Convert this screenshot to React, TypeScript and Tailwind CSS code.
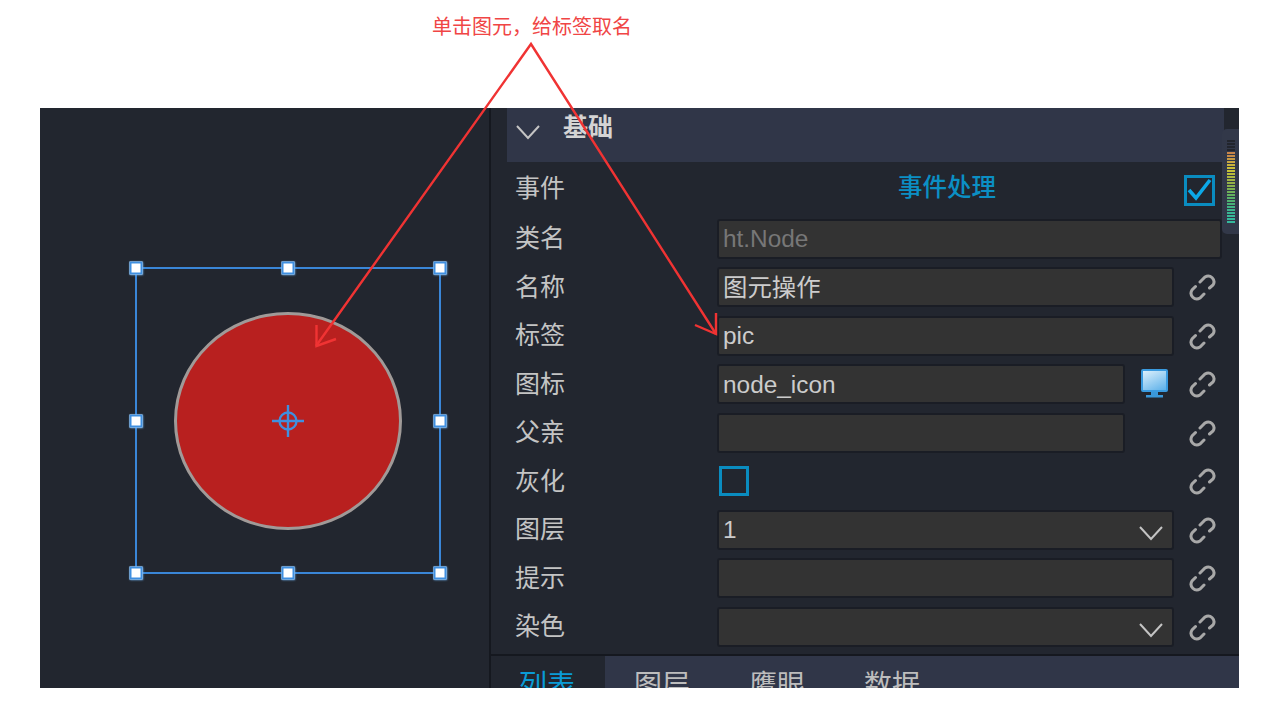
import React from 'react';

const FONT = "font-['Liberation_Sans','Noto_Sans_CJK_SC',sans-serif]";

const ROWS = [
  { label: '类名', value: 'ht.Node', kind: 'wide' },
  { label: '名称', value: '图元操作', kind: 'input' },
  { label: '标签', value: 'pic', kind: 'input' },
  { label: '图标', value: 'node_icon', kind: 'icon' },
  { label: '父亲', value: '', kind: 'short' },
  { label: '灰化', value: '', kind: 'check' },
  { label: '图层', value: '1', kind: 'select' },
  { label: '提示', value: '', kind: 'input' },
  { label: '染色', value: '', kind: 'select' },
];

const TABS = ['列表', '图层', '鹰眼', '数据'];

// meter on the scroll thumb, top to bottom
const METER = [
  '#22252d', '#22252d', '#22252d', '#22252d',
  '#c8854a', '#c88c48', '#c89a44', '#c8a640', '#c8b23c', '#c8bc38', '#c4c038', '#b8bc3c', '#acb840',
  '#a0b444', '#94b048', '#88b04c', '#7cb050', '#70b058', '#64b060', '#58b068', '#50b070', '#48b078',
  '#40b484', '#3cb48c', '#38b494', '#38b898', '#34b89c', '#34b89c',
];

function LinkIcon() {
  return (
    <svg width="28" height="28" viewBox="0 0 28 28" fill="none" stroke="#a8a8a8" strokeWidth="3" strokeLinecap="round" className="shrink-0">
      <path d="M11 9 L16 4 A5.8 5.8 0 0 1 24 12 L20.5 15" />
      <path d="M6.5 13.5 L3 17 A5.8 5.8 0 0 0 11 25 L15 21" />
    </svg>
  );
}

function Chevron({ className }: { className?: string }) {
  return (
    <svg width="24" height="24" viewBox="0 0 24 24" fill="none" stroke="#c4c4c4" strokeWidth="2" className={className}>
      <path d="M1 5 L12 17 L23 5" />
    </svg>
  );
}

function MonitorIcon() {
  return (
    <svg width="28" height="30" viewBox="0 0 28 30" className="shrink-0">
      <defs>
        <linearGradient id="screen" x1="0.2" y1="0" x2="0.8" y2="1">
          <stop offset="0" stopColor="#d8eefb" />
          <stop offset="1" stopColor="#5fb2ea" />
        </linearGradient>
      </defs>
      <rect x="1" y="1" width="25" height="21" rx="1" fill="url(#screen)" stroke="#3a9be0" strokeWidth="2" />
      <rect x="10" y="23" width="7" height="3" fill="#3a97d8" />
      <rect x="5" y="26" width="17" height="2.5" fill="#3a97d8" />
    </svg>
  );
}

function Field({ value, muted, className, children }: { value: string; muted?: boolean; className: string; children?: React.ReactNode }) {
  return (
    <div className={`flex h-[40px] items-center justify-between rounded-[3px] border-2 border-[#1a1d25] bg-[#333333] pl-[4px] pr-[9px] text-[24.4px] ${muted ? 'text-[#777777]' : 'text-[#cccccc]'} ${className}`}>
      <span className="translate-y-[1px]">{value}</span>
      {children}
    </div>
  );
}

function Row({ row }: { row: (typeof ROWS)[number] }) {
  const linked = row.kind !== 'wide';
  return (
    <div className="flex h-[48.5px] items-center">
      <div className="w-[210px] pl-[8px] text-[25px] text-[#c4c4c4]">{row.label}</div>
      {row.kind === 'wide' && <Field value={row.value} muted className="w-[505px]" />}
      {row.kind === 'input' && <Field value={row.value} className="w-[457px]" />}
      {row.kind === 'select' && (
        <Field value={row.value} className="w-[457px]">
          <Chevron className="translate-y-[4px]" />
        </Field>
      )}
      {(row.kind === 'icon' || row.kind === 'short') && (
        <>
          <Field value={row.value} className="w-[408px]" />
          <div className="w-[49px] pl-[16px]">{row.kind === 'icon' && <MonitorIcon />}</div>
        </>
      )}
      {row.kind === 'check' && (
        <div className="w-[457px] pl-[2px]">
          <div className="h-[30px] w-[30px] border-[3px] border-[#0a8cc0]" />
        </div>
      )}
      {linked && (
        <div className="ml-[15px]">
          <LinkIcon />
        </div>
      )}
    </div>
  );
}

function Handle({ className }: { className: string }) {
  return <div className={`absolute h-[13px] w-[13px] -translate-x-1/2 -translate-y-1/2 border-2 border-[#3f8fe0] bg-white shadow-[0_0_2px_#6fb0f0] ${className}`} />;
}

function Canvas() {
  return (
    <div className="relative w-[449px] shrink-0 bg-[#22262f]">
      {/* selected node */}
      <div className="absolute left-[95px] top-[159px] h-[307px] w-[306px] border-2 border-[#3a86d8]">
        <div className="absolute left-[37px] top-[43px] h-[218px] w-[228px] rounded-[50%] border-[3px] border-[#a09a98] bg-[#b8201f]" />
        <svg width="32" height="32" viewBox="0 0 32 32" fill="none" stroke="#3f8fe0" strokeWidth="2.4" className="absolute left-[135px] top-[136px]">
          <circle cx="16" cy="16" r="8.5" />
          <path d="M0 16 H32 M16 0 V32" />
        </svg>
        <div className="absolute -inset-[1px]">
          <Handle className="left-0 top-0" />
          <Handle className="left-1/2 top-0" />
          <Handle className="left-full top-0" />
          <Handle className="left-0 top-1/2" />
          <Handle className="left-full top-1/2" />
          <Handle className="left-0 top-full" />
          <Handle className="left-1/2 top-full" />
          <Handle className="left-full top-full" />
        </div>
      </div>
    </div>
  );
}

function PropertyPanel() {
  return (
    <div className="flex min-w-0 flex-1 flex-col border-l-2 border-[#15181f] bg-[#22262f]">
      <div className="relative flex-1">
        <div className="ml-[16px] mr-[15px] flex h-[54px] items-center bg-[#303648] pl-[9px] text-[#d4d4d4]">
          <Chevron className="-translate-y-[2px]" />
          <span className="ml-[23px] -translate-y-[7px] text-[25px] font-bold">基础</span>
        </div>

        <div className="ml-[16px] pt-[4px]">
          <div className="flex h-[48.5px] items-center">
            <div className="w-[210px] -translate-y-[2px] pl-[8px] text-[25px] text-[#c4c4c4]">事件</div>
            <div className="w-[460px] -translate-y-[2px] text-center text-[24.5px] font-medium text-[#0b8fc4]">事件处理</div>
            <div className="ml-[7px] h-[31px] w-[31px] border-[3px] border-[#0a8cc0]">
              <svg width="25" height="25" viewBox="0 0 25 25" fill="none" stroke="#0ca8e8" strokeWidth="3.6">
                <path d="M2 12 L9 20 L23 2" />
              </svg>
            </div>
          </div>
          {ROWS.map((row) => (
            <Row key={row.label} row={row} />
          ))}
        </div>

        {/* scroll thumb with meter */}
        <div className="absolute right-0 top-[21px] flex h-[105px] w-[17px] flex-col items-center gap-[1px] rounded-l-[5px] bg-[#323849] pt-[11px]">
          {METER.map((color, i) => (
            <div key={i} className="h-[2px] w-[8px]" style={{ backgroundColor: color }} />
          ))}
        </div>
      </div>

      <div className="flex h-[34px] overflow-hidden border-t-2 border-[#15181f] bg-[#303648] text-[28px] leading-[34px] text-[#bdbdbd]">
        {TABS.map((tab, i) => (
          <div key={tab} className={`${i === 0 ? 'w-[114px] bg-[#22262f] pl-[28px] text-[#0a9bd6]' : 'w-[115px] pl-[29px]'} pt-[13px]`}>
            {tab}
          </div>
        ))}
      </div>
    </div>
  );
}

export default function App() {
  return (
    <div className={`relative h-[706px] w-[1271px] overflow-hidden bg-white ${FONT}`}>
      <div className="h-[108px] pl-[432px] pt-[13px] text-[20px] leading-[28px] text-[#f04545]">
        单击图元，给标签取名
      </div>
      <div className="ml-[40px] flex h-[580px] w-[1199px]">
        <Canvas />
        <PropertyPanel />
      </div>

      {/* red annotation arrows */}
      <svg width="1271" height="706" viewBox="0 0 1271 706" fill="none" stroke="#f03333" strokeWidth="2.4" className="pointer-events-none absolute left-0 top-0">
        <path d="M316 346 L531 44 L716 334" />
        <path d="M316.5 325 L316.5 346 L336 339" />
        <path d="M695 325 L716 334 L716 313" />
      </svg>
    </div>
  );
}
